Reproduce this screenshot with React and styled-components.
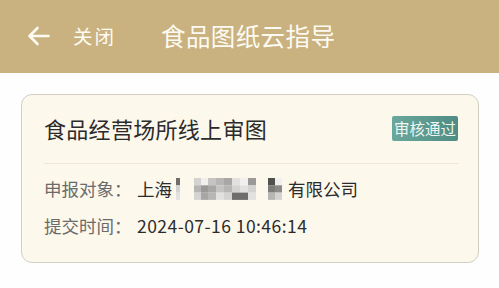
import React from "react";
import styled, { createGlobalStyle } from "styled-components";

const Global = createGlobalStyle`
  html, body { margin: 0; padding: 0; background: #fefefe; }
  body { font-family: "Noto Sans CJK SC", "Noto Sans", sans-serif; }
`;

const Page = styled.div`
  width: 499px;
  height: 288px;
  overflow: hidden;
  background: #fefefe;
`;

const Header = styled.header`
  height: 73px;
  background: #c9b27f;
  display: flex;
  align-items: center;
  padding-left: 27px;
  box-sizing: border-box;
  color: #fdfaf2;
`;

const Back = styled.div`
  display: flex;
  align-items: center;
  gap: 23px;
  margin-top: -2px;
`;

const BackLabel = styled.span`
  font-size: 19.5px;
  letter-spacing: 2px;
`;

const HeaderTitle = styled.h1`
  margin: -2px 0 0 45px;
  font-size: 24.5px;
  font-weight: 400;
  letter-spacing: 0.4px;
`;

const Body = styled.main`
  padding: 21px 20px 0 21px;
`;

const Card = styled.section`
  background: #fdf8ec;
  border: 1px solid #d4cfc4;
  border-radius: 11px;
  height: 169px;
  box-sizing: border-box;
  padding: 0 20px 0 22px;
`;

const CardHead = styled.div`
  display: flex;
  align-items: center;
  justify-content: space-between;
  height: 68px;
  border-bottom: 1px solid #ece6d8;
`;

const CardTitle = styled.h2`
  margin: 0 0 2px 0;
  font-size: 22px;
  font-weight: 400;
  color: #2b2b2b;
  letter-spacing: 0.3px;
`;

const Badge = styled.span`
  background: linear-gradient(90deg, #6aa79c, #4f8c83);
  color: #eef7f3;
  font-size: 15.5px;
  line-height: 25px;
  padding: 0 2px;
  border-radius: 2px;
  margin-bottom: 2px;
`;

const Rows = styled.div`
  display: flex;
  flex-direction: column;
  gap: 11px;
  padding-top: 12px;
`;

const Row = styled.div`
  display: flex;
  align-items: center;
  font-size: 17.5px;
  line-height: 26px;
`;

const Label = styled.span`
  color: #6b6b6b;
  width: 93px;
  flex: none;
`;

const Value = styled.span`
  color: #2b2b2b;
  display: flex;
  align-items: center;
  letter-spacing: ${(p) => (p.$digits ? "0.45px" : "0")};
`;

const MOSAIC = [
  [2, 4, ["#555", "#ccc", "#ddd"]],
  [20, 7, ["#ccc", "#aaa", "#ccc"]],
  [27, 7, ["#eee", "#888", "#999"]],
  [34, 8, ["#bbb", "#999", "#aaa"]],
  [42, 8, ["#aaa", "#bbb", "#ddd"]],
  [50, 8, ["#999", "#aaa", "#ccc"]],
  [58, 8, ["#ddd", "#ccc", "#555"]],
  [66, 8, ["#eee", "#ddd", "#555"]],
  [74, 8, ["#888", "#ccc", "#ddd"]],
  [94, 7, ["#333", "#666", "#aaa"]],
  [101, 7, ["#eee", "#777", "#ccc"]],
];

const Mosaic = () => (
  <svg width="112" height="22" viewBox="0 0 112 22" style={{ display: "block", margin: "0 2px 0 2px" }}>
    {MOSAIC.map(([x, w, cols]) =>
      cols.map((f, r) => (
        <rect key={`${x}-${r}`} x={x} y={r * 7.3} width={w} height="7.3" fill={f} opacity="0.85" />
      ))
    )}
  </svg>
);

const Arrow = () => (
  <svg width="23" height="20" viewBox="0 0 23 20" fill="none" stroke="#fdfaf2" strokeWidth="2.6" strokeLinecap="round" strokeLinejoin="round">
    <path d="M21.5 10H2.5M10.5 2L2.5 10l8 8" />
  </svg>
);

export default function App() {
  return (
    <Page>
      <Global />
      <Header>
        <Back>
          <Arrow />
          <BackLabel>关闭</BackLabel>
        </Back>
        <HeaderTitle>食品图纸云指导</HeaderTitle>
      </Header>
      <Body>
        <Card>
          <CardHead>
            <CardTitle>食品经营场所线上审图</CardTitle>
            <Badge>审核通过</Badge>
          </CardHead>
          <Rows>
            <Row>
              <Label>申报对象：</Label>
              <Value>
                上海
                <Mosaic />
                有限公司
              </Value>
            </Row>
            <Row>
              <Label>提交时间：</Label>
              <Value $digits>2024-07-16 10:46:14</Value>
            </Row>
          </Rows>
        </Card>
      </Body>
    </Page>
  );
}
